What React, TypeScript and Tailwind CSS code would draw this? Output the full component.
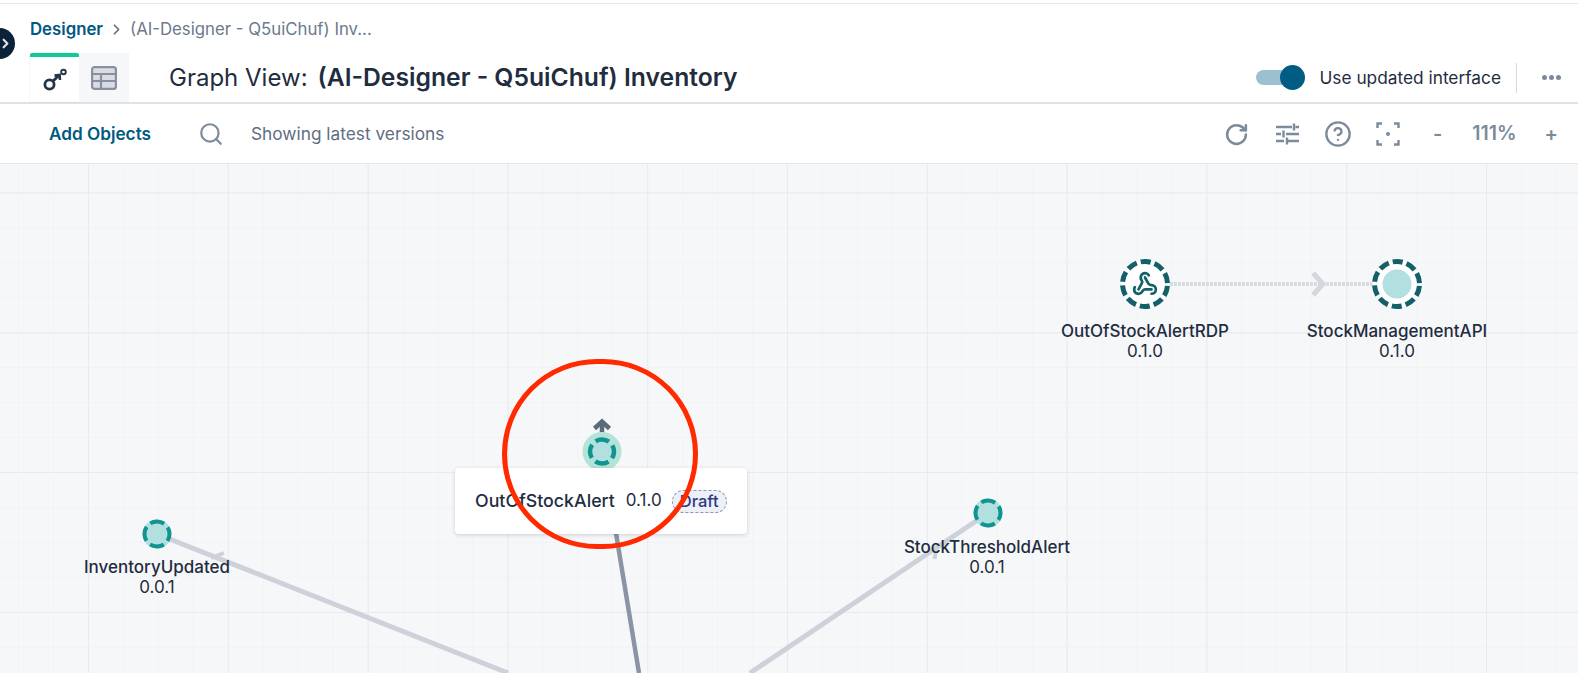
import { ChevronRight, CircleHelp, RotateCw, Search, Webhook } from "lucide-react";

type NodeProps = { x: number; y: number; name: string; version: string };

function NodeLabel({ x, y, name, version }: NodeProps) {
  return (
    <div className="absolute flex w-[240px] flex-col items-center text-center text-[#1f2d3f]" style={{ left: x - 120, top: y - 164 }}>
      <span className="text-[17px] leading-[20px] font-medium whitespace-nowrap">{name}</span>
      <span className="text-[17px] leading-[20px] whitespace-nowrap">{version}</span>
    </div>
  );
}

function GraphTabIcon() {
  return (
    <svg width="26" height="26" viewBox="0 0 26 26" fill="none" stroke="#243548" strokeWidth="2.8">
      <circle cx="7.5" cy="17.5" r="4.6" />
      <path d="M11 14 L17 8.5" />
      <path d="M12.5 8.6 L17.6 8 L18 13" strokeWidth="2.6" />
      <circle cx="21.5" cy="5" r="2.3" strokeWidth="1.9" />
    </svg>
  );
}

function TableTabIcon() {
  return (
    <svg width="26" height="24" viewBox="0 0 26 24" fill="none" stroke="#878fa0" strokeWidth="2.2">
      <rect x="1.1" y="1.1" width="23.8" height="21.8" rx="2.5" fill="#d9dce3" />
      <path d="M1 8 H25 M1 15 H25 M10 8 V23" />
    </svg>
  );
}

function SlidersIcon() {
  return (
    <svg width="24" height="22" viewBox="0 0 24 22" fill="none" stroke="#7d8a9c" strokeWidth="2.4">
      <path d="M1 4 H17 M20.5 4 H24 M19 0.5 V7.5" />
      <path d="M1 11 H6 M11 11 H24 M8.5 7.5 V14.5" />
      <path d="M1 18 H9 M12 18 H24 M12 14.5 V21.5" />
    </svg>
  );
}

function FocusIcon() {
  return (
    <svg width="24" height="24" viewBox="0 0 24 24" fill="none" stroke="#7d8a9c" strokeWidth="2.4">
      <path d="M1.5 6 V1.5 H6 M18 1.5 H22.5 V6 M22.5 18 V22.5 H18 M6 22.5 H1.5 V18" />
      <circle cx="12" cy="12" r="2" fill="#7d8a9c" stroke="none" />
    </svg>
  );
}

export default function App() {
  return (
    <div className="relative flex h-[673px] w-full flex-col overflow-hidden bg-white font-['Inter',sans-serif] text-[#1f2d3f]">
      {/* top strip */}
      <div className="h-1 shrink-0 border-b border-[#e4e6ea]" />

      {/* collapsed sidebar button */}
      <div className="absolute top-[28px] left-[-16px] z-10 flex h-[31px] w-[31px] items-center justify-center rounded-full bg-[#0b2238] pl-[11px]">
        <ChevronRight size={15} color="#dfe5ea" strokeWidth={3.4} />
      </div>

      {/* breadcrumb */}
      <div className="flex h-[49px] shrink-0 items-center pt-[2px] pl-[30px] text-[16.8px]">
        <span className="font-semibold text-[#00597f]">Designer</span>
        <ChevronRight size={17} className="mx-[5px] text-[#5f6e80]" strokeWidth={2.4} />
        <span className="text-[#6b7a8c]">(AI-Designer - Q5uiChuf) Inv...</span>
      </div>

      {/* header row */}
      <div className="flex h-[51px] shrink-0 items-stretch border-b-2 border-[#dfe2e8] pl-[30px]">
        <div className="flex w-[49px] items-center justify-center rounded-t-[2px] border-t-[4px] border-[#10c995] shadow-[0_0_2px_rgba(0,0,0,0.12)]">
          <GraphTabIcon />
        </div>
        <div className="flex w-[50px] items-center justify-center bg-[#f6f7f9]">
          <TableTabIcon />
        </div>
        <div className="ml-[40px] flex items-center gap-[10px] text-[24px]">
          <span>Graph View:</span>
          <span className="text-[24.7px] font-semibold">(AI-Designer - Q5uiChuf) Inventory</span>
        </div>
        <div className="ml-auto flex items-center">
          <div className="relative mr-[19px] h-[15px] w-[44px] rounded-full bg-[#9cc0d0]">
            <div className="absolute top-[-5px] right-[-5px] h-[25px] w-[25px] rounded-full bg-[#005c85]" />
          </div>
          <span className="text-[17.3px] text-[#1f2d3f]">Use updated interface</span>
          <div className="mr-[25px] ml-[15px] h-[30px] w-px bg-[#d5d9e0]" />
          <div className="mr-[17px] flex gap-[2px]">
            <span className="h-[5px] w-[5px] rounded-full bg-[#7d8a9c]" />
            <span className="h-[5px] w-[5px] rounded-full bg-[#7d8a9c]" />
            <span className="h-[5px] w-[5px] rounded-full bg-[#7d8a9c]" />
          </div>
        </div>
      </div>

      {/* toolbar */}
      <div className="flex h-[60px] shrink-0 items-center border-b border-[#e4e6ea] pt-[1px] pl-[49px]">
        <span className="text-[17.2px] font-semibold text-[#00597f]">Add Objects</span>
        <Search size={26} className="ml-[47px] text-[#7d8a9c]" strokeWidth={2} />
        <span className="ml-[27px] text-[17.3px] text-[#5f6e80]">Showing latest versions</span>
        <div className="ml-auto flex items-center pr-[20px] text-[#7d8a9c]">
          <RotateCw size={25} strokeWidth={2.4} />
          <div className="ml-[26px]"><SlidersIcon /></div>
          <CircleHelp size={28} strokeWidth={2} className="ml-[25px]" />
          <div className="ml-[24px]"><FocusIcon /></div>
          <span className="ml-[33px] text-[20px] font-semibold">-</span>
          <span className="ml-[30px] text-[19.5px] font-semibold">111%</span>
          <span className="ml-[28px] text-[20px] font-semibold">+</span>
        </div>
      </div>

      {/* graph canvas */}
      <div className="relative flex-1 bg-[#f6f7f9]">
        <svg className="absolute inset-0" width="1578" height="509" viewBox="0 1 1578 509">
          <defs>
            <pattern id="minor" x="18.1" y="-5.6" width="34.95" height="34.95" patternUnits="userSpaceOnUse">
              <path d="M34.95 0 H0 V34.95" fill="none" stroke="#eff0f3" strokeWidth="1" />
            </pattern>
            <pattern id="major" x="88" y="29.5" width="139.8" height="139.8" patternUnits="userSpaceOnUse">
              <path d="M139.8 0 H0 V139.8" fill="none" stroke="#e8eaee" strokeWidth="2" />
            </pattern>
          </defs>
          <rect y="1" width="1578" height="509" fill="url(#minor)" />
          <rect y="1" width="1578" height="509" fill="url(#major)" />

          {/* edges */}
          <g fill="none" strokeLinecap="butt">
            <path d="M157 371 L508 510" stroke="#cdd1d9" strokeWidth="5" />
            <path d="M224 390 L211 395" stroke="#cdd1d9" strokeWidth="4" />
            <path d="M988 350 L750 510" stroke="#cdd1d9" strokeWidth="5" />
            <path d="M936 388 L934.5 396" stroke="#cdd1d9" strokeWidth="4" />
            <path d="M602 285 L639 510" stroke="#8a94a6" strokeWidth="4.5" />
            <path d="M1170 121 H1372" stroke="#d8dbe0" strokeWidth="4" strokeDasharray="3 1" />
            <path d="M1313 110 L1323 121 L1313 132" stroke="#d4d7dd" strokeWidth="5" />
            <path d="M602 285 V260" stroke="#5a6b7b" strokeWidth="4.5" />
            <path d="M594.5 265.5 L602 258.5 L609.5 265.5" stroke="#5a6b7b" strokeWidth="4.5" />
          </g>

          {/* nodes */}
          <circle cx="1145" cy="121" r="24" fill="#fff" />
          <circle cx="1145" cy="121" r="22.5" fill="none" stroke="#14606a" strokeWidth="5" strokeDasharray="10.2 3.94" strokeDashoffset="-1.97" />
          <circle cx="1397" cy="121" r="24" fill="#fff" />
          <circle cx="1397" cy="121" r="22.5" fill="none" stroke="#14606a" strokeWidth="5" strokeDasharray="10.2 3.94" strokeDashoffset="-1.97" />
          <circle cx="1397" cy="121" r="14.5" fill="#b2dfdf" />
          <circle cx="602" cy="288.5" r="19.5" fill="#b5e3d8" />
          <circle cx="602" cy="288.5" r="12" fill="#b2dfdf" stroke="#0f9490" strokeWidth="4.5" strokeDasharray="14 4.85" strokeDashoffset="7" />
          <circle cx="157" cy="371" r="14.5" fill="#b2dfdf" />
          <circle cx="157" cy="371" r="12.5" fill="none" stroke="#0f9490" strokeWidth="4" strokeDasharray="14.6 5" strokeDashoffset="7.3" />
          <circle cx="988" cy="350" r="14.5" fill="#b2dfdf" />
          <circle cx="988" cy="350" r="12.5" fill="none" stroke="#0f9490" strokeWidth="4" strokeDasharray="14.6 5" strokeDashoffset="7.3" />
        </svg>

        <Webhook size={26} color="#14606a" strokeWidth={2.5} className="absolute top-[107px] left-[1132px]" />

        <NodeLabel x={1145} y={321} name="OutOfStockAlertRDP" version="0.1.0" />
        <NodeLabel x={1397} y={321} name="StockManagementAPI" version="0.1.0" />
        <NodeLabel x={157} y={557} name="InventoryUpdated" version="0.0.1" />
        <NodeLabel x={987} y={537} name="StockThresholdAlert" version="0.0.1" />

        {/* selected node card */}
        <div className="absolute top-[304px] left-[455px] flex h-[66px] w-[292px] items-center rounded-[4px] bg-white pl-[20px] shadow-[0_1px_4px_rgba(15,30,50,0.18)]">
          <span className="text-[17.8px] font-medium">OutOfStockAlert</span>
          <span className="ml-[11px] text-[17px]">0.1.0</span>
          <span className="ml-[10px] flex h-[23px] w-[55px] items-center justify-center rounded-full border border-dashed border-[#8f95b8] bg-[#eef0f7] text-[16.5px] font-medium text-[#2e3a80]">Draft</span>
        </div>

        {/* annotation */}
        <div className="pointer-events-none absolute top-[195px] left-[502px] h-[190px] w-[196px] rounded-full border-[5px] border-[#ff2a00]" />
      </div>
    </div>
  );
}
